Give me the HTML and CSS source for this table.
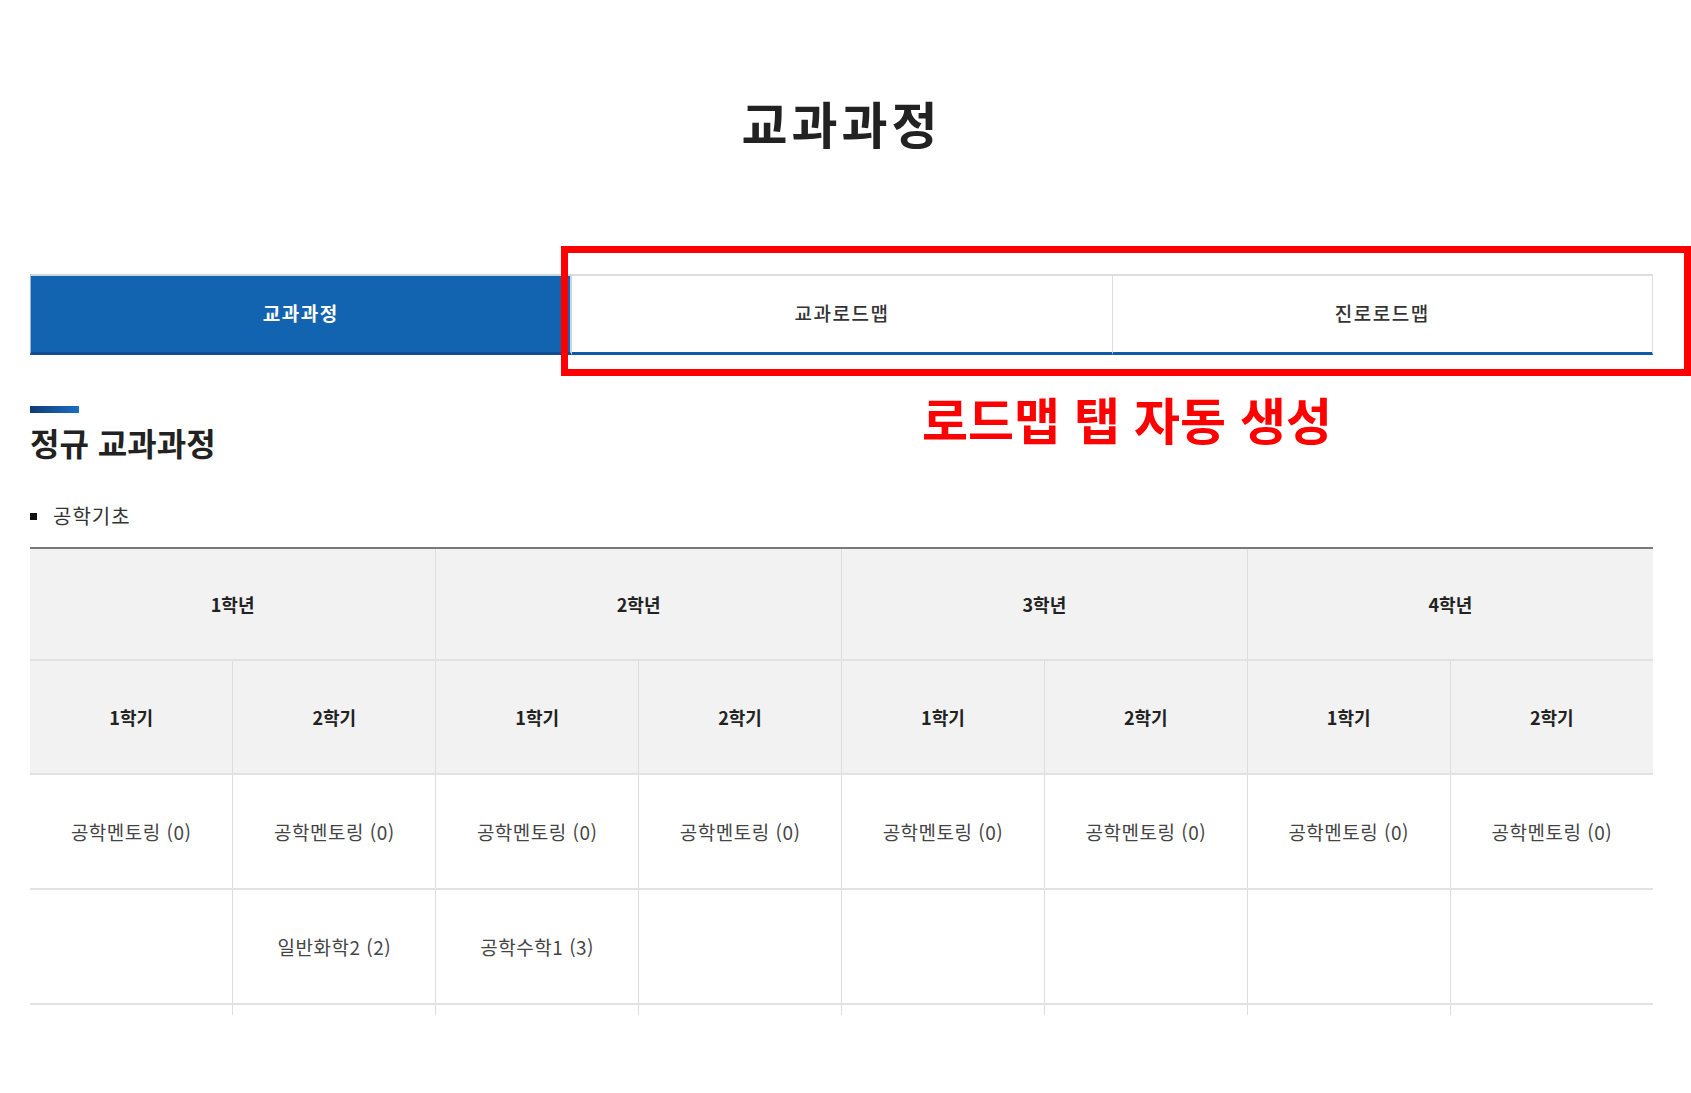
FILE: index.html
```html
<!DOCTYPE html>
<html lang="ko">
<head>
<meta charset="utf-8">
<title>교과과정</title>
<link rel="stylesheet" href="styles.css">
</head>
<body>
<div class="page">
  <h1 class="page-title">교과과정</h1>

  <nav class="tabs">
    <a class="tab tab-active">교과과정</a>
    <a class="tab">교과로드맵</a>
    <a class="tab">진로로드맵</a>
  </nav>

  <section class="section">
    <span class="section-bar"></span>
    <h2 class="section-title">정규 교과과정</h2>
    <p class="bullet">공학기초</p>

    <table class="curriculum">
      <colgroup>
        <col><col><col><col><col><col><col><col>
      </colgroup>
      <thead>
        <tr class="row-year">
          <th colspan="2">1학년</th>
          <th colspan="2">2학년</th>
          <th colspan="2">3학년</th>
          <th colspan="2">4학년</th>
        </tr>
        <tr class="row-term">
          <th>1학기</th><th>2학기</th>
          <th>1학기</th><th>2학기</th>
          <th>1학기</th><th>2학기</th>
          <th>1학기</th><th>2학기</th>
        </tr>
      </thead>
      <tbody>
        <tr class="row-body">
          <td>공학멘토링 (0)</td><td>공학멘토링 (0)</td>
          <td>공학멘토링 (0)</td><td>공학멘토링 (0)</td>
          <td>공학멘토링 (0)</td><td>공학멘토링 (0)</td>
          <td>공학멘토링 (0)</td><td>공학멘토링 (0)</td>
        </tr>
        <tr class="row-body">
          <td></td><td>일반화학2 (2)</td>
          <td>공학수학1 (3)</td><td></td>
          <td></td><td></td>
          <td></td><td></td>
        </tr>
        <tr class="row-tail">
          <td></td><td></td><td></td><td></td>
          <td></td><td></td><td></td><td></td>
        </tr>
      </tbody>
    </table>
  </section>

  <div class="highlight-box"></div>
  <p class="highlight-note">로드맵 탭 자동 생성</p>
</div>
</body>
</html>
```

FILE: styles.css
```css
* {
  box-sizing: border-box;
}

html, body {
  margin: 0;
  padding: 0;
  background: #ffffff;
  overflow-x: hidden;
}

body {
  font-family: "Noto Sans CJK KR", "Noto Sans", sans-serif;
  color: #333333;
}

.page {
  position: relative;
  width: 1691px;
  height: 1093px;
  padding: 0 38px 0 30px;
}

.page-title {
  margin: 0;
  padding-top: 92px;
  height: 274px;
  line-height: 60px;
  font-size: 50px;
  font-weight: 700;
  color: #222222;
  text-align: center;
  letter-spacing: 4px;
}

.tabs {
  display: flex;
  height: 81px;
}

.tab {
  flex: 1 1 0;
  display: flex;
  align-items: center;
  justify-content: center;
  font-size: 19px;
  font-weight: 500;
  color: #333333;
  letter-spacing: 1.5px;
  background: #ffffff;
  border-top: 2px solid #dddddd;
  border-right: 1px solid #dddddd;
  border-bottom: 3px solid #0f5aa8;
  padding-bottom: 3px;
}

.tab-active {
  background: #1264b1;
  color: #ffffff;
  font-weight: 700;
  border-top-color: #c9d6e4;
  border-right: 2px solid #c9d6e4;
  border-left: 1px solid #9fb6cf;
  border-bottom-color: #0d4e96;
}

.section {
  padding-top: 51px;
}

.section-bar {
  display: block;
  width: 49px;
  height: 7px;
  background: linear-gradient(90deg, #113a73 0%, #1b6fc6 100%);
}

.section-title {
  margin: 9px 0 0;
  line-height: 40px;
  font-size: 32px;
  font-weight: 700;
  color: #222222;
  letter-spacing: 0;
}

.bullet {
  position: relative;
  margin: 41px 0 0;
  padding-left: 23px;
  line-height: 26px;
  font-size: 20px;
  color: #333333;
  letter-spacing: 1px;
}

.bullet::before {
  content: "";
  position: absolute;
  left: 0;
  top: 10px;
  width: 7px;
  height: 7px;
  background: #111111;
}

.curriculum {
  width: 100%;
  margin-top: 18px;
  border-collapse: collapse;
  table-layout: fixed;
  border-top: 2px solid #7a7a7a;
}

.curriculum th,
.curriculum td {
  padding: 0;
  text-align: center;
  font-size: 18px;
  border-left: 1px solid #dddddd;
  border-bottom: 2px solid #e2e2e2;
}

.curriculum th:first-child,
.curriculum td:first-child {
  border-left: none;
}

.curriculum th {
  background: #f2f2f2;
  font-weight: 700;
  color: #222222;
  letter-spacing: 0;
}

.row-year th {
  height: 112px;
}

.row-term th {
  height: 114px;
}

.row-body td {
  height: 115px;
  font-size: 19px;
  font-weight: 400;
  color: #444444;
  letter-spacing: 0.5px;
}

.row-tail td {
  height: 11px;
  border-bottom: none;
}

.highlight-box {
  position: absolute;
  left: 561px;
  top: 246px;
  width: 1130px;
  height: 130px;
  border: 7px solid #ff0000;
  pointer-events: none;
}

.highlight-note {
  position: absolute;
  left: 922px;
  top: 388px;
  margin: 0;
  line-height: 60px;
  font-size: 50px;
  font-weight: 700;
  color: #ff0000;
  letter-spacing: 0;
}
```
